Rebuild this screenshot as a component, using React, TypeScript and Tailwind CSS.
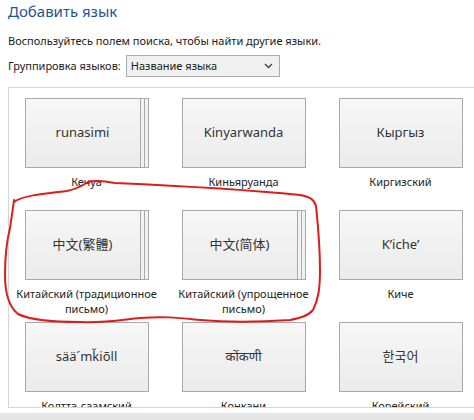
import React from "react";

type Item = { native: string; label: string[]; stacked?: boolean };

const rows: Item[][] = [
  [
    { native: "runasimi", label: ["Кечуа"], stacked: true },
    { native: "Kinyarwanda", label: ["Киньяруанда"] },
    { native: "Кыргыз", label: ["Киргизский"] },
  ],
  [
    { native: "中文(繁體)", label: ["Китайский (традиционное", "письмо)"], stacked: true },
    { native: "中文(简体)", label: ["Китайский (упрощенное", "письмо)"], stacked: true },
    { native: "K’iche’", label: ["Киче"] },
  ],
  [
    { native: "sää´mǩiõll", label: ["Колтта-саамский"] },
    { native: "कोंकणी", label: ["Конкани"] },
    { native: "한국어", label: ["Корейский"] },
  ],
];

function Tile({ item }: { item: Item }) {
  return (
    <div className="w-[123px] h-[112px] flex flex-col items-center">
      <div className="w-[124px] h-[70px] flex">
        <div className="flex-1 border border-[#a9a9a9] bg-gradient-to-b from-[#f7f7f7] to-[#ebebeb] flex items-center justify-center text-[13px] text-[#333]">
          {item.native}
        </div>
        {item.stacked && (
          <>
            <div className="w-[4px] border-y border-r border-[#a9a9a9] bg-[#f2f2f2]" />
            <div className="w-[4px] border-y border-r border-[#a9a9a9] bg-[#f2f2f2]" />
          </>
        )}
      </div>
      <div className="mt-[6px] text-[11px] leading-[15px] text-[#222] text-center whitespace-nowrap">
        {item.label.map((l, i) => (
          <div key={i}>{l}</div>
        ))}
      </div>
    </div>
  );
}

export default function App() {
  return (
    <div
      className="relative w-[474px] h-[420px] overflow-hidden bg-white"
      style={{ fontFamily: '"Segoe UI", "Noto Sans", "Noto Sans CJK SC", "Noto Sans CJK KR", sans-serif' }}
    >
      <div className="pl-2 text-[15px] leading-[22px] text-[#1f5496]">Добавить язык</div>
      <div className="pl-2 mt-[11px] text-[11px] leading-[16px] text-[#1a1a1a]">
        Воспользуйтесь полем поиска, чтобы найти другие языки.
      </div>
      <div className="pl-2 mt-[6px] flex items-center gap-[5px] h-[22px]">
        <span className="text-[11px] text-[#1a1a1a]">Группировка языков:</span>
        <div className="w-[154px] h-[22px] border border-[#acacac] bg-[#f0f0f0] flex items-center justify-between pl-[4px] pr-[6px] text-[11px] text-[#1a1a1a]">
          <span>Название языка</span>
          <svg width="9" height="6" viewBox="0 0 9 6" fill="none">
            <path d="M1 1l3.5 3.5L8 1" stroke="#444" strokeWidth="1.4" />
          </svg>
        </div>
      </div>
      <div className="ml-2 mt-[10px] h-[321px] border-l border-t border-b border-[#d5d5d5] overflow-hidden pl-[16px] pt-[10px]">
        <div className="flex flex-col">
          {rows.map((r, i) => (
            <div key={i} className="flex gap-[34px]">
              {r.map((it, j) => (
                <Tile key={j} item={it} />
              ))}
            </div>
          ))}
        </div>
      </div>
      <div className="mt-[5px] h-[10px] bg-[#e6e6e6]" />
      <svg className="absolute left-0 top-0 pointer-events-none" width="474" height="420" viewBox="0 0 474 420">
        <path
          d="M14 202 C 22 196, 40 194, 67 191 C 76 189, 82 186, 88 182 C 95 180, 105 181, 115 183 C 160 185, 240 189, 300 195 C 310 197, 314 199, 316 206 C 318 225, 320 250, 320 270 C 320 290, 318 300, 313 310 C 308 316, 300 318, 290 320 C 260 322, 235 323, 200 320 C 180 318, 165 316, 140 318 C 120 320, 105 323, 80 322 C 55 322, 30 320, 18 314 C 8 306, 5 290, 5 275 C 5 258, 7 240, 10 228 C 12 215, 13 208, 14 200"
          fill="none"
          stroke="#e11b1b"
          strokeWidth="2"
          strokeLinecap="round"
        />
      </svg>
    </div>
  );
}
